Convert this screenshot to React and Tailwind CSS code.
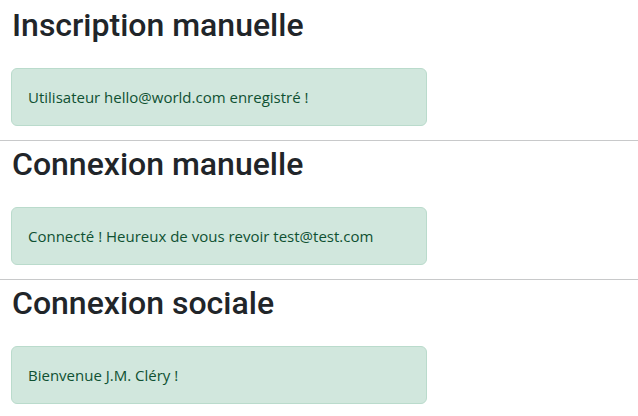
import React from "react";

const sections = [
  { title: "Inscription manuelle", message: "Utilisateur hello@world.com enregistré !" },
  { title: "Connexion manuelle", message: "Connecté ! Heureux de vous revoir test@test.com" },
  { title: "Connexion sociale", message: "Bienvenue J.M. Cléry !" },
];

const Alert = ({ children }) => (
  <div className="mt-[24px] h-[58px] w-[416px] rounded-[6px] border border-[#badbcc] bg-[#d1e7dd] px-4 py-4 font-['Open_Sans',sans-serif] text-[15px] leading-6 text-[#0f5132]">
    {children}
  </div>
);

export default function App() {
  return (
    <div className="min-h-screen bg-white pt-[2px] text-[#212529]">
      {sections.map((s, i) => (
        <div key={s.title}>
          <section className="px-[11px]">
            <h2 className="mt-[4px] h-[38px] pl-px font-['Roboto',sans-serif] text-[32px] font-medium leading-[38px]">{s.title}</h2>
            <Alert>{s.message}</Alert>
          </section>
          {i < sections.length - 1 && <hr className="mt-[14px] border-t border-[#c8c9ca]" />}
        </div>
      ))}
    </div>
  );
}
